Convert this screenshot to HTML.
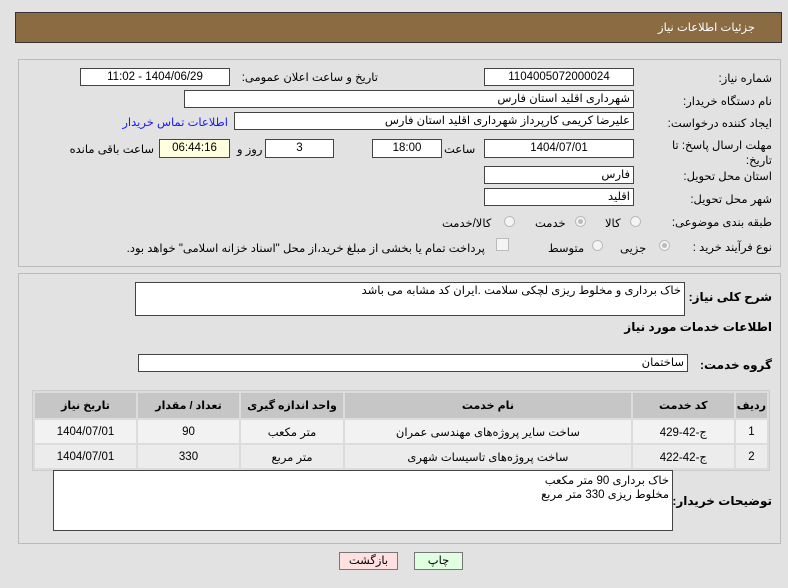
<!DOCTYPE html>
<html><head><meta charset="utf-8"><style>
body{margin:0;width:788px;height:588px;background:#e2e2e2;font-family:"Liberation Sans","DejaVu Sans",sans-serif;font-size:11.5px;color:#000;position:relative;overflow:hidden}
.a{position:absolute;white-space:nowrap}
.hdr{left:15px;top:12px;width:767px;height:31px;background:#8b6b42;border:1px solid #333;box-sizing:border-box}
.panel{border:1px solid #bbb;background:#e2e2e2;position:absolute;box-sizing:border-box}
.in{position:absolute;background:#fff;border:1px solid #444;box-sizing:border-box;direction:rtl;padding:0 3px;line-height:16px;white-space:nowrap;font-size:11.5px}
.c{text-align:center}
.lbl{position:absolute;direction:rtl;white-space:nowrap}
.r{position:absolute;width:11px;height:11px;border-radius:50%;border:1px solid #bbb;background:#f4f4f4;box-sizing:border-box}
.r.on::after{content:"";position:absolute;left:2px;top:2px;width:5px;height:5px;border-radius:50%;background:#bbb}
table{position:absolute;border-collapse:separate;border-spacing:2px;background:#dcdcdc;border:1px solid #ccc;direction:rtl}
th{background:#c6c6c6;height:23px;font-weight:bold;font-size:11px}
td{background:#f2f2f2;height:21px;text-align:center;font-size:11.5px}
tr.e td{background:#ececec}
.b{font-weight:bold;font-size:12px}
</style></head><body>
<div class="a hdr"></div>
<div class="a" style="right:33px;top:20px;color:#fff;direction:rtl">جزئیات اطلاعات نیاز</div>

<div class="panel" style="left:18px;top:59px;width:763px;height:208px"></div>
<div class="lbl" style="right:16px;top:71px">شماره نیاز:</div>
<div class="in c" style="left:484px;top:68px;width:150px;height:18px">1104005072000024</div>
<div class="lbl" style="right:410px;top:70px">تاریخ و ساعت اعلان عمومی:</div>
<div class="in c" style="left:80px;top:68px;width:150px;height:18px">1404/06/29 - 11:02</div>

<div class="lbl" style="right:16px;top:94px">نام دستگاه خریدار:</div>
<div class="in" style="left:184px;top:90px;width:450px;height:18px">شهرداری اقلید استان فارس</div>

<div class="lbl" style="right:16px;top:116px">ایجاد کننده درخواست:</div>
<div class="in" style="left:234px;top:112px;width:400px;height:18px">علیرضا کریمی  کارپرداز شهرداری اقلید استان فارس</div>
<div class="lbl" style="right:560px;top:115px;color:#1a1aff">اطلاعات تماس خریدار</div>

<div class="lbl" style="right:16px;top:138px">مهلت ارسال پاسخ: تا</div>
<div class="lbl" style="right:16px;top:153px">تاریخ:</div>
<div class="in c" style="left:484px;top:139px;width:150px;height:19px">1404/07/01</div>
<div class="lbl" style="left:444px;top:142px">ساعت</div>
<div class="in c" style="left:372px;top:139px;width:70px;height:19px">18:00</div>
<div class="in c" style="left:265px;top:139px;width:69px;height:19px">3</div>
<div class="lbl" style="left:237px;top:142px">روز و</div>
<div class="in c" style="left:159px;top:139px;width:71px;height:19px;background:#ffffe0">06:44:16</div>
<div class="lbl" style="right:634px;top:142px">ساعت باقی مانده</div>

<div class="lbl" style="right:16px;top:169px">استان محل تحویل:</div>
<div class="in" style="left:484px;top:166px;width:150px;height:18px">فارس</div>
<div class="lbl" style="right:16px;top:192px">شهر محل تحویل:</div>
<div class="in" style="left:484px;top:188px;width:150px;height:18px">اقلید</div>

<div class="lbl" style="right:16px;top:215px">طبقه بندی موضوعی:</div>
<div class="r" style="left:630px;top:216px"></div><div class="lbl" style="left:605px;top:216px">کالا</div>
<div class="r on" style="left:575px;top:216px"></div><div class="lbl" style="left:535px;top:216px">خدمت</div>
<div class="r" style="left:504px;top:216px"></div><div class="lbl" style="left:442px;top:216px">کالا/خدمت</div>

<div class="lbl" style="right:16px;top:240px">نوع فرآیند خرید :</div>
<div class="r on" style="left:659px;top:240px"></div><div class="lbl" style="left:620px;top:241px">جزیی</div>
<div class="r" style="left:592px;top:240px"></div><div class="lbl" style="left:548px;top:241px">متوسط</div>
<div class="a" style="left:496px;top:238px;width:11px;height:11px;border:1px solid #bbb;background:#f4f4f4"></div>
<div class="lbl" style="right:303px;top:241px">پرداخت تمام یا بخشی از مبلغ خرید،از محل "اسناد خزانه اسلامی" خواهد بود.</div>

<div class="panel" style="left:18px;top:273px;width:763px;height:271px"></div>
<div class="lbl b" style="right:16px;top:290px">شرح کلی نیاز:</div>
<div class="in" style="left:135px;top:282px;width:550px;height:34px">خاک برداری و مخلوط ریزی  لچکی سلامت .ایران کد مشابه می باشد</div>
<div class="lbl b" style="right:16px;top:320px">اطلاعات خدمات مورد نیاز</div>
<div class="lbl b" style="right:16px;top:358px">گروه خدمت:</div>
<div class="in" style="left:138px;top:354px;width:550px;height:18px">ساختمان</div>

<table style="left:32px;top:390px;width:738px">
<tr><th style="width:24px">ردیف</th><th style="width:99px">کد خدمت</th><th>نام خدمت</th><th style="width:100px">واحد اندازه گیری</th><th style="width:99px">تعداد / مقدار</th><th style="width:99px">تاریخ نیاز</th></tr>
<tr><td>1</td><td>ج-42-429</td><td>ساخت سایر پروژه‌های مهندسی عمران</td><td>متر مکعب</td><td>90</td><td>1404/07/01</td></tr>
<tr class="e"><td>2</td><td>ج-42-422</td><td>ساخت پروژه‌های تاسیسات شهری</td><td>متر مربع</td><td>330</td><td>1404/07/01</td></tr>
</table>

<div class="lbl b" style="right:16px;top:494px">توضیحات خریدار:</div>
<div class="in" style="left:53px;top:470px;width:620px;height:61px;white-space:normal;line-height:14px;padding-top:3px">خاک برداری 90 متر مکعب<br>مخلوط ریزی 330 متر مربع</div>

<div class="a c" style="left:339px;top:552px;width:59px;height:18px;background:#ffe0e0;border:1px solid #777;box-sizing:border-box;line-height:16px">بازگشت</div>
<div class="a c" style="left:414px;top:552px;width:49px;height:18px;background:#e0ffe0;border:1px solid #777;box-sizing:border-box;line-height:16px">چاپ</div>
</body></html>
